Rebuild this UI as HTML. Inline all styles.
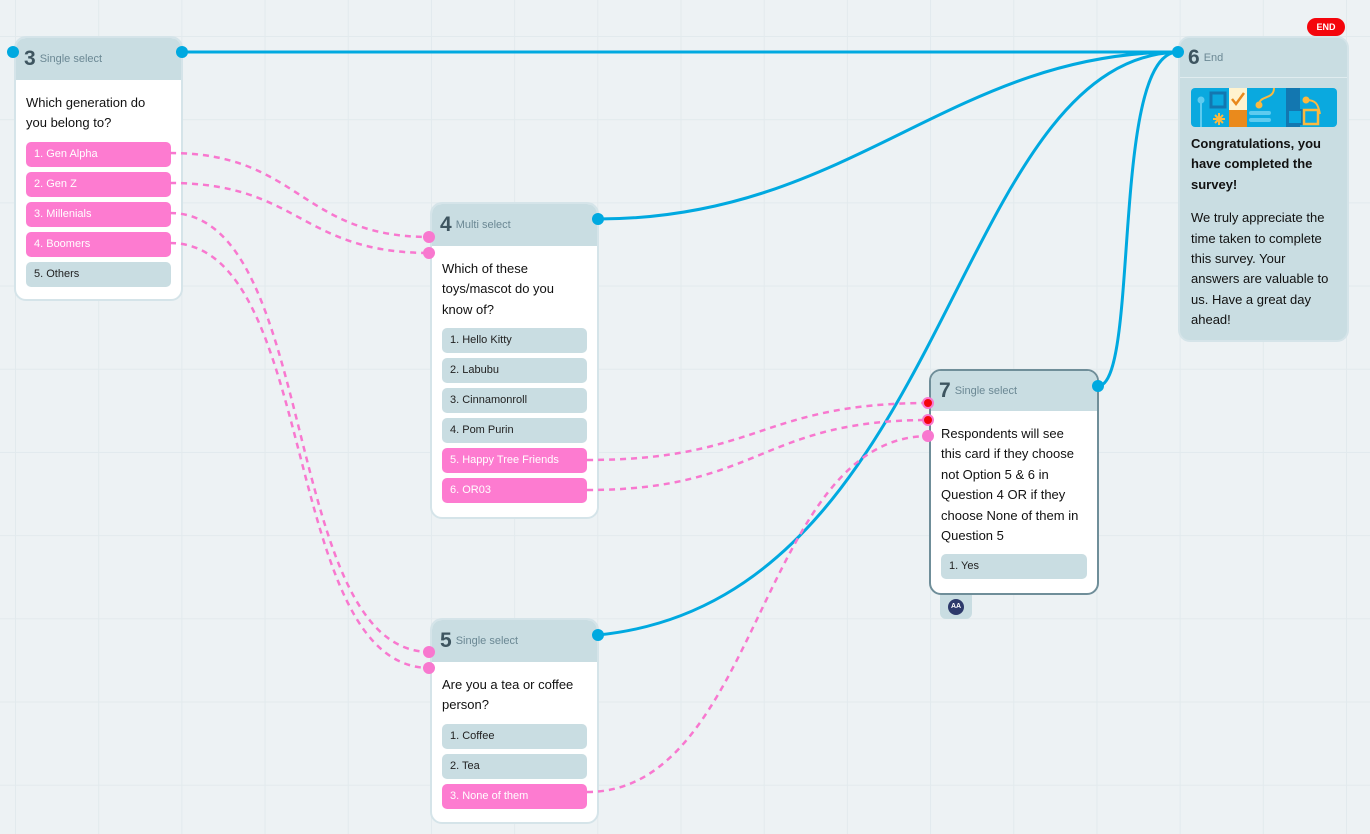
<!DOCTYPE html>
<html><head><meta charset="utf-8"><style>
*{box-sizing:border-box;margin:0;padding:0}
body{width:1370px;height:834px;overflow:hidden;background:#edf2f4;font-family:"Liberation Sans",sans-serif;position:relative;
background-image:linear-gradient(to right,#e2eaed 1px,transparent 1px),linear-gradient(to bottom,#e2eaed 1px,transparent 1px);
background-size:83.2px 83.2px;background-position:15px 36px}
.card{position:absolute;background:#fff;border:2px solid #d5e4e9;border-radius:12px;overflow:hidden}
.hd{height:42px;background:#c9dde2;display:flex;align-items:center;padding-left:8px}
.num{font-size:21px;font-weight:bold;color:#3e5560;margin-right:4px}
.typ{font-size:11px;color:#6b8894}
.q{font-size:13px;line-height:20.4px;color:#111;padding:13px 10px 0 10px}
.opt{height:25px;border-radius:5px;background:#c9dde2;font-size:11px;color:#222;padding-left:8px;line-height:25px;margin:0 10px 5px 10px}
.opt.p{background:#fd7bd0;color:#fff}
svg{position:absolute;left:0;top:0}
</style></head><body>
<svg width="1370" height="834" style="z-index:0">
<g fill="none" stroke="#00a9e0" stroke-width="3">
<path d="M14 52 H1178"/>
<path d="M598 219 C850 219 950 52 1178 52"/>
<path d="M598 635 C950 600 950 60 1178 52"/>
<path d="M1098 386 C1140 386 1110 52 1178 52"/>
</g>
</svg>
<div class="card" style="left:14px;top:36px;width:169px;height:265px">
<div class="hd"><span class="num">3</span><span class="typ">Single select</span></div>
<div class="q" style="padding-bottom:8px;padding-right:14px">Which generation do you belong to?</div>
<div class="opt p">1. Gen Alpha</div><div class="opt p">2. Gen Z</div><div class="opt p">3. Millenials</div><div class="opt p">4. Boomers</div><div class="opt">5. Others</div>
</div>
<div class="card" style="left:430px;top:202px;width:169px;height:317px">
<div class="hd"><span class="num">4</span><span class="typ">Multi select</span></div>
<div class="q" style="padding-bottom:8px">Which of these toys/mascot do you know of?</div>
<div class="opt">1. Hello Kitty</div><div class="opt">2. Labubu</div><div class="opt">3. Cinnamonroll</div><div class="opt">4. Pom Purin</div><div class="opt p">5. Happy Tree Friends</div><div class="opt p">6. OR03</div>
</div>
<div class="card" style="left:430px;top:618px;width:169px;height:206px">
<div class="hd"><span class="num">5</span><span class="typ">Single select</span></div>
<div class="q" style="padding-bottom:8px">Are you a tea or coffee person?</div>
<div class="opt">1. Coffee</div><div class="opt">2. Tea</div><div class="opt p">3. None of them</div>
</div>
<div style="position:absolute;left:940px;top:590px;width:32px;height:29px;background:#c9dde2;border-radius:0 0 6px 6px"><div style="position:absolute;left:8px;top:9px;width:16px;height:16px;border-radius:50%;background:#2d3a6b;color:#fff;font-size:7px;font-weight:bold;text-align:center;line-height:16px">AA</div></div>
<div class="card" style="left:929px;top:369px;width:170px;height:226px;border-color:#6f8e99">
<div class="hd" style="height:40px"><span class="num">7</span><span class="typ">Single select</span></div>
<div class="q" style="padding-bottom:8px">Respondents will see this card if they choose not Option 5 &amp; 6 in Question 4 OR if they choose None of them in Question 5</div>
<div class="opt">1. Yes</div>
</div>
<div class="card" style="left:1178px;top:36px;width:171px;height:306px;background:#c9dde2">
<div class="hd" style="height:40px;border-bottom:1px solid #e0ecef"><span class="num">6</span><span class="typ">End</span></div>
<svg width="146" height="39" style="position:absolute;left:11px;top:50px">
<rect width="146" height="39" rx="4" fill="#0aa9df"/>
<rect x="20" y="5" width="14" height="14" fill="none" stroke="#1377b0" stroke-width="3"/>
<rect x="38" y="0" width="18" height="22" fill="#fff3cf"/><path d="M41 11 l4 5 l8 -11" stroke="#e8891c" stroke-width="2.5" fill="none"/>
<rect x="38" y="22" width="18" height="17" fill="#ea8a1c"/>
<path d="M28 25 v12 M22 31 h12 M24 27 l8 8 M32 27 l-8 8" stroke="#fbb93f" stroke-width="2"/>
<rect x="58" y="23" width="22" height="4" rx="2" fill="#5ecbef"/><rect x="58" y="30" width="22" height="4" rx="2" fill="#5ecbef"/>
<path d="M68 17 c0 -10 15 -5 15 -17" stroke="#fbb93f" stroke-width="2" fill="none"/><circle cx="68" cy="17" r="3.5" fill="#fbb93f"/>
<rect x="95" y="0" width="14" height="39" fill="#1377b0"/><rect x="97" y="22" width="14" height="14" fill="#0aa9df" stroke="#1377b0" stroke-width="2"/>
<rect x="113" y="22" width="14" height="14" fill="#0aa9df" stroke="#fbb93f" stroke-width="2.5"/>
<path d="M115 12 c10 0 12 4 14 14" stroke="#fbb93f" stroke-width="2" fill="none"/><circle cx="115" cy="12" r="3.5" fill="#fbb93f"/>
<path d="M10 12 v27" stroke="#5ecbef" stroke-width="2"/><circle cx="10" cy="12" r="3.5" fill="#5ecbef"/>
</svg>
<div style="position:absolute;left:11px;top:96px;width:150px;font-size:13px;line-height:20.4px;color:#111">
<b>Congratulations, you have completed the survey!</b><div style="margin-top:13px;width:144px">We truly appreciate the time taken to complete this survey. Your<br>answers are valuable to us. Have a great day ahead!</div></div>
</div>
<div style="position:absolute;left:1307px;top:18px;width:38px;height:18px;background:#f4050c;border-radius:9px;color:#fff;font-size:9px;font-weight:bold;text-align:center;line-height:18px">END</div>
<svg width="1370" height="834" style="z-index:5;pointer-events:none">
<g fill="none" stroke="#f878cf" stroke-width="2.5" stroke-dasharray="6 5">
<path d="M170 153 C300 153 300 237 430 237"/>
<path d="M170 183 C300 183 300 253 430 253"/>
<path d="M170 213 C320 213 280 652 430 652"/>
<path d="M170 243 C320 243 280 668 430 668"/>
<path d="M587 460 C760 460 760 403 929 403"/>
<path d="M587 490 C760 490 760 420 929 420"/>
<path d="M587 792 C760 792 760 436 929 436"/>
</g>
<g fill="#00a9e0"><circle cx="13" cy="52" r="6"/><circle cx="182" cy="52" r="6"/><circle cx="1178" cy="52" r="6"/><circle cx="598" cy="219" r="6"/><circle cx="598" cy="635" r="6"/><circle cx="1098" cy="386" r="6"/></g>
<g fill="#f878cf"><circle cx="429" cy="237" r="6"/><circle cx="429" cy="253" r="6"/><circle cx="429" cy="652" r="6"/><circle cx="429" cy="668" r="6"/><circle cx="928" cy="436" r="6"/></g>
<g fill="#f4050c" stroke="#f878cf" stroke-width="2"><circle cx="928" cy="403" r="5"/><circle cx="928" cy="420" r="5"/></g>
</svg>
</body></html>
